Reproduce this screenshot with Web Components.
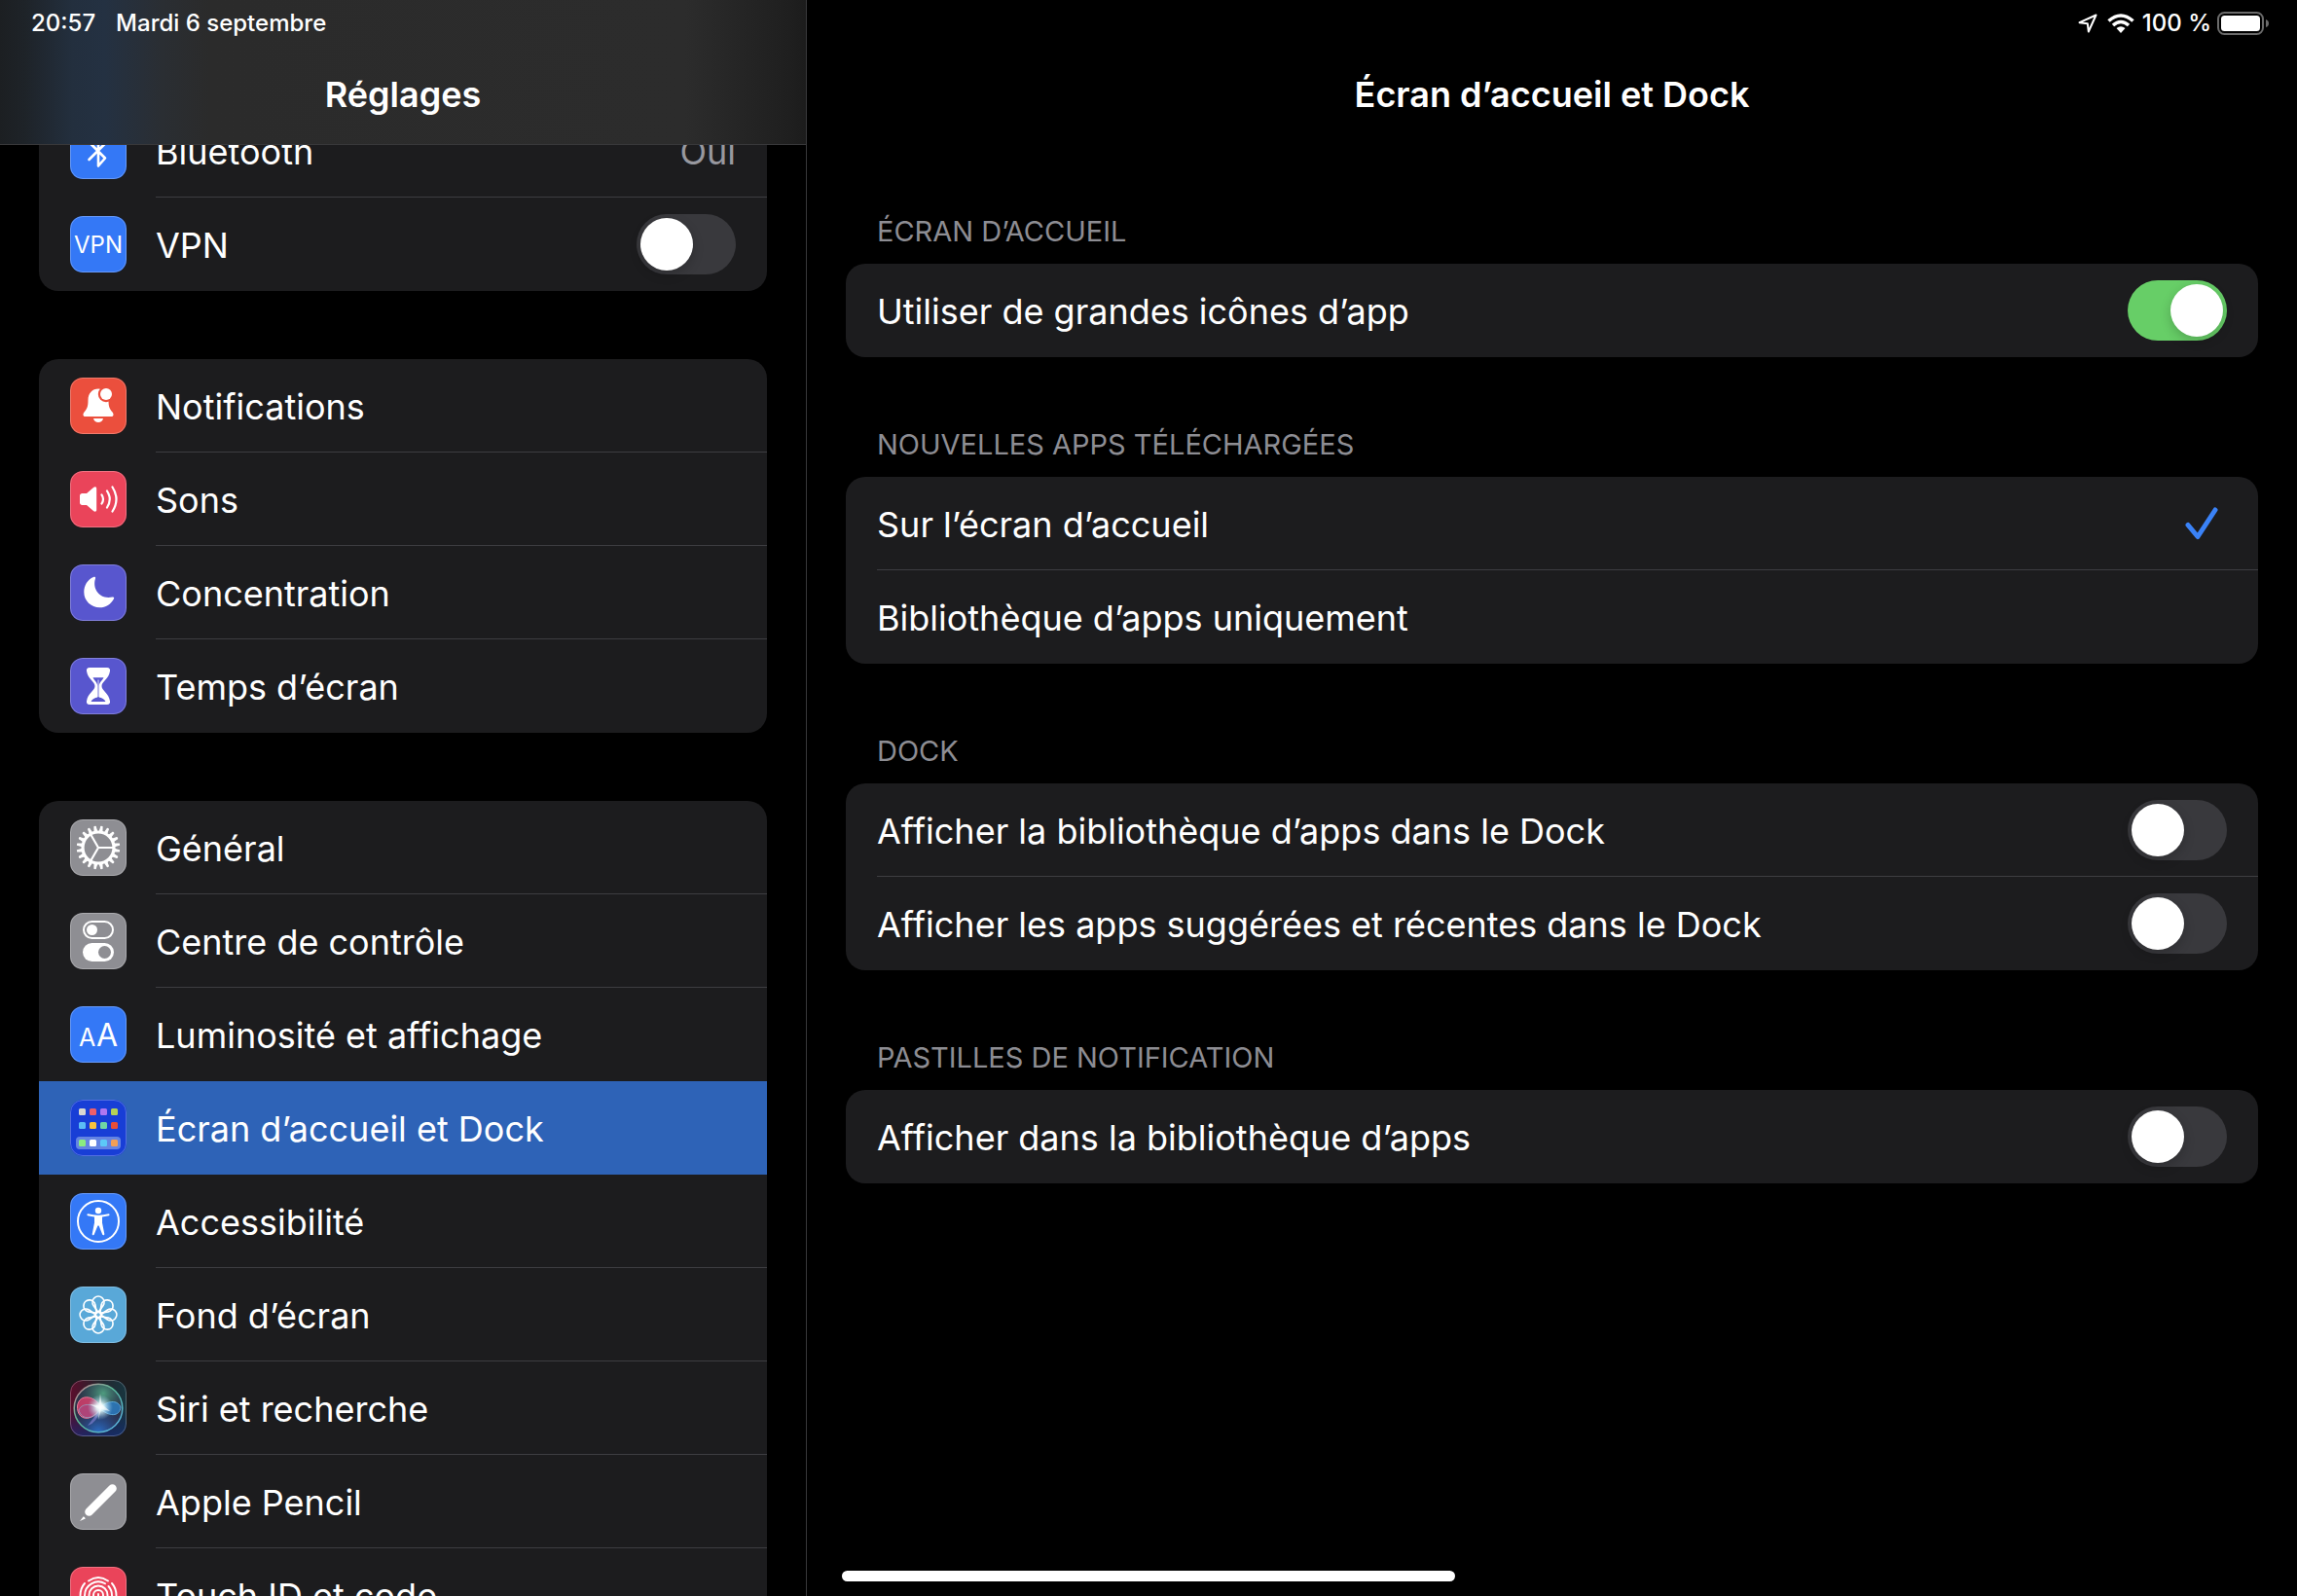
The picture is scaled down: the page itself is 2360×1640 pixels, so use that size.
<!DOCTYPE html>
<html lang="fr">
<head>
<meta charset="utf-8">
<title>Réglages</title>
<style>
    html, body {
        height: 100%;
        margin: 0;
        background: #000;
    }

    body {
        overflow: hidden;
        color: #fff;
        font-family: Inter, "Liberation Sans", sans-serif;
        font-size: 36px;
        line-height: 44px;
    }
</style>
</head>
<body>
<settings-app>
    <status-time slot="time"></status-time>
    <status-icons slot="status"></status-icons>

    <settings-group slot="sidebar">
        <settings-row icon="bluetooth" value="Oui">Bluetooth</settings-row>
        <settings-row icon="vpn" toggle>VPN</settings-row>
    </settings-group>
    <settings-group slot="sidebar">
        <settings-row icon="notifications">Notifications</settings-row>
        <settings-row icon="sounds">Sons</settings-row>
        <settings-row icon="focus">Concentration</settings-row>
        <settings-row icon="screentime">Temps d’écran</settings-row>
    </settings-group>
    <settings-group slot="sidebar">
        <settings-row icon="general">Général</settings-row>
        <settings-row icon="control">Centre de contrôle</settings-row>
        <settings-row icon="display" flush>Luminosité et affichage</settings-row>
        <settings-row icon="home" selected flush>Écran d’accueil et Dock</settings-row>
        <settings-row icon="accessibility">Accessibilité</settings-row>
        <settings-row icon="wallpaper">Fond d’écran</settings-row>
        <settings-row icon="siri">Siri et recherche</settings-row>
        <settings-row icon="pencil">Apple Pencil</settings-row>
        <settings-row icon="touchid">Touch ID et code</settings-row>
    </settings-group>

    <settings-group caption="ÉCRAN D’ACCUEIL">
        <settings-row toggle checked>Utiliser de grandes icônes d’app</settings-row>
    </settings-group>
    <settings-group caption="NOUVELLES APPS TÉLÉCHARGÉES">
        <settings-row choice checked>Sur l’écran d’accueil</settings-row>
        <settings-row choice>Bibliothèque d’apps uniquement</settings-row>
    </settings-group>
    <settings-group caption="DOCK">
        <settings-row toggle>Afficher la bibliothèque d’apps dans le Dock</settings-row>
        <settings-row toggle>Afficher les apps suggérées et récentes dans le Dock</settings-row>
    </settings-group>
    <settings-group caption="PASTILLES DE NOTIFICATION">
        <settings-row toggle>Afficher dans la bibliothèque d’apps</settings-row>
    </settings-group>
</settings-app>

<script>
// Every glyph is drawn on a 58x58 tile: [background, svg content]
const gearTeeth = Array.from({length: 20}, (_, i) =>
    `<path d="M27.600 12.500L28.300 7.200H29.700L30.400 12.500Z" transform="rotate(${i * 18 + 9} 29 29)"/>`).join('')

const petals = Array.from({length: 8}, (_, i) =>
    `<path d="M29 26.500L24 19.500A6 6 0 1 1 34 19.500Z" transform="rotate(${i * 45} 29 29)"/>`).join('')

const homeColors = [
    ['#d8d8d0', '#ec5f6b', '#b077f0', '#b5d256'],
    ['#5cbcf5', '#f8c23c', '#70d6a4', '#e84e37'],
    ['#8bee80', '#ffffff', '#5cc8f8', '#f29f55'],
]
const homeDots = homeColors.map((row, y) => row.map((color, x) =>
    `<rect x="${9 + x * 11}" y="${[9, 23, 41][y]}" width="7" height="7" rx="1.500" fill="${color}"/>`).join('')).join('')

const icons = {
    bluetooth: ['#3478f6', `<path d="M19.500 20L36 36.500L29 44.500V13.500L36 21.500L19.500 38" fill="none" stroke="#fff" stroke-width="2.600" stroke-linejoin="round" stroke-linecap="round"/>`],
    vpn: ['#3478f6', `<text x="29" y="37.500" text-anchor="middle" font-size="24">VPN</text>`],
    notifications: ['#eb4f3d', `
        <path d="M29 11.500C23 11.500 18.500 16 18.500 23C18.500 30 17.500 32 14.500 35.500C13 37.500 13 40 15.500 40H42.500C45 40 45 37.500 43.500 35.500C40.500 32 39.500 30 39.500 23C39.500 16 35 11.500 29 11.500Z"/>
        <circle cx="37" cy="17" r="8.200" fill="#eb4f3d"/><circle cx="37" cy="17" r="6"/>
        <path d="M24 42H34C33.500 44.500 31.500 46 29 46S24.500 44.500 24 42Z"/>`],
    sounds: ['#ea445a', `
        <path d="M10 25.500C10 24 11 23 12.500 23H17L24 17C25.500 15.700 27.200 16.300 27.200 18V40C27.200 41.700 25.500 42.300 24 41L17 35H12.500C11 35 10 34 10 32.500Z"/>
        <path d="M32.500 24.500Q35.500 29 32.500 33.500M38 20.500Q43.500 29 38 37.500M43.500 16.500Q51.500 29 43.500 41.500" fill="none" stroke="#fff" stroke-width="2.200" stroke-linecap="round"/>`],
    focus: ['#5856ce', `<path d="M24 13C25.500 12.500 26.500 13.200 26 14.500C22.500 25 30.500 36.500 43.500 33.500C45 33.200 45.500 34 45 35.200C42 41 36.500 44.300 30.500 44.300C21.500 44.300 14.300 37.200 14.300 28.500C14.300 21.500 18 15.500 24 13Z"/>`],
    screentime: ['#5856ce', `
        <path d="M20 10H38C40.300 10 41.300 11.500 41 13.500C40 21.500 32.500 24.500 32.500 29S40 36.500 41 44.500C41.300 46.500 40.300 48 38 48H20C17.700 48 16.700 46.500 17 44.500C18 36.500 25.500 33.500 25.500 29S18 21.500 17 13.500C16.700 11.500 17.700 10 20 10Z"/>
        <path d="M23.500 20.200H34.500C33 23.500 29.700 25.500 29.700 29V40.500C32.500 41 35.500 42.500 36.500 45H21.500C22.500 42.500 25.500 41 28.300 40.500V29C28.300 25.500 25 23.500 23.500 20.200Z" fill="#5856ce"/>
        <path d="M29 22.500V40" stroke="#fff" stroke-width="0.800"/>`],
    general: ['#8e8e93', `
        <circle cx="29" cy="29" r="16" fill="none" stroke="#fff" stroke-width="3.200"/>
        <g stroke="#fff" stroke-width="1" stroke-linejoin="round">${gearTeeth}</g>
        <path d="M29 29H44M29 29L21.500 16M29 29L21.500 42" stroke="#fff" stroke-width="2.200"/>`],
    control: ['#8e8e93', `
        <rect x="14" y="9" width="30" height="17" rx="8.500" fill="none" stroke="#fff" stroke-width="2"/><circle cx="22.500" cy="17.500" r="5.500"/>
        <rect x="13" y="31" width="32" height="19" rx="9.500"/><circle cx="35.500" cy="40.500" r="6.500" fill="#8e8e93"/>`],
    display: ['#3478f6', `<text x="9" y="41" font-size="25">A</text><text x="27" y="41" font-size="32">A</text>`],
    home: ['#183ed6', `<rect x="6" y="38" width="46" height="13" rx="4" fill="#6484e3"/>${homeDots}`],
    accessibility: ['#3478f6', `
        <circle cx="29" cy="29" r="21" fill="none" stroke="#fff" stroke-width="2"/><circle cx="29" cy="18" r="3.200"/>
        <path d="M18.500 21.300Q29 24 39.500 21.300C40.800 21.200 41 22.800 39.800 23.200L33 24.600V30.500L35.300 42C35.400 43.400 33.600 43.700 33.200 42.500L29.600 33.500H28.400L24.800 42.500C24.400 43.700 22.600 43.400 22.700 42L25 30.500V24.600L18.200 23.200C17 22.800 17.200 21.200 18.500 21.300Z"/>`],
    wallpaper: ['#59a8d8', `<g fill="none" stroke="#fff" stroke-width="1.700">${petals}<circle cx="29" cy="29" r="3.200"/></g>`],
    siri: ['#231830', `
        <defs>
            <linearGradient id="base" x1="0" y1="0" x2="1" y2="0"><stop offset="0" stop-color="#5c0d2c"/><stop offset=".5" stop-color="#26242c"/><stop offset="1" stop-color="#173640"/></linearGradient>
            <linearGradient id="deep" x1="0" y1="0" x2="0" y2="1"><stop offset=".5" stop-color="#10206a" stop-opacity="0"/><stop offset="1" stop-color="#142c7c" stop-opacity=".7"/></linearGradient>
            <linearGradient id="rim" x1="0" y1="0" x2="1" y2="1"><stop offset="0" stop-color="#d08094"/><stop offset=".45" stop-color="#58b896"/><stop offset="1" stop-color="#5ab0f0"/></linearGradient>
            <radialGradient id="green" cx=".6" cy=".2" r=".55"><stop offset="0" stop-color="#4f9d80"/><stop offset="1" stop-color="#2c5a60" stop-opacity="0"/></radialGradient>
            <radialGradient id="blue" cx=".5" cy="1" r=".6"><stop offset="0" stop-color="#2c70c8"/><stop offset="1" stop-color="#20408c" stop-opacity="0"/></radialGradient>
            <radialGradient id="glow"><stop offset="0" stop-color="#fff"/><stop offset=".3" stop-color="#e8ffff" stop-opacity=".9"/><stop offset="1" stop-color="#9ce" stop-opacity="0"/></radialGradient>
        </defs>
        <rect width="58" height="58" fill="url(#base)"/><rect width="58" height="58" fill="url(#deep)"/>
        <circle cx="29" cy="29" r="25" fill="#2c3046"/><circle cx="29" cy="29" r="25" fill="url(#green)"/><circle cx="29" cy="29" r="25" fill="url(#blue)"/>
        <path d="M32 29C27 16 9 13 7.500 27C7 42 22 44 32 29Z" fill="#d63e6c" fill-opacity=".85" stroke="#ec7a98"/>
        <path d="M9 31C13 22 24 26 31 29C24 41 12 42 9 31Z" fill="#a04c88" fill-opacity=".5" stroke="#93a9cc" stroke-width=".7"/>
        <path d="M30 29C38 21 49 20 52 28C51 38 40 38 30 29Z" fill="#2c7ac0" fill-opacity=".85" stroke="#66b8e8" stroke-width=".8"/>
        <path d="M31 30L18 47Q28 44 31 30L43 43Z" fill="#8b85d8" fill-opacity=".6"/>
        <circle cx="29" cy="29" r="24.800" fill="none" stroke="url(#rim)" stroke-width="1.500"/>
        <circle cx="31" cy="28" r="13" fill="url(#glow)"/>
        <path d="M31 14L32.500 25L41 32L32 30L29 41L30 30L20 25L29.500 26Z" fill="#fff" fill-opacity=".6"/>`],
    pencil: ['#8e8e93', `
        <path d="M43.500 15.500L19.500 39.500" stroke="#fff" stroke-width="8.600" stroke-linecap="round"/>
        <path d="M13.800 44.200Q15.300 45 15.800 46.500L10 49Z"/>`],
    touchid: ['#ea445a', `<g fill="none" stroke="#fff" stroke-width="1.900" stroke-linecap="round">
        <path d="M19 14.500Q29 7.500 39 14.500M15 17Q10.500 22 10.500 29.500M43 17Q47.500 22 47.500 29.500"/>
        <path d="M15 34V29.500A14 14 0 0 1 36 17.300M39.500 20A14 14 0 0 1 43 29.500V36"/>
        <path d="M19.500 38V29A9.500 9.500 0 0 1 38.500 29V40M24 40V29A5 5 0 0 1 34 29V42M29 28V42"/></g>`],
}

class StatusTime extends HTMLElement {
    constructor() {
        super();
        this.attachShadow({mode: 'open'}).innerHTML = `
            <style>
                :host {
                    display: flex;
                    gap: 21px;
                    font-size: 24px;
                    line-height: 28px;
                    font-weight: 500;
                }
            </style>
            <span>20:57</span><span>Mardi 6 septembre</span>
        `
    }
}

class StatusIcons extends HTMLElement {
    constructor() {
        super();
        this.attachShadow({mode: 'open'}).innerHTML = `
            <style>
                :host {
                    display: flex;
                    align-items: center;
                    font-size: 24px;
                    line-height: 28px;
                    font-weight: 500;
                }
                .wifi { margin: 0 8px 0 10px; }
                .battery { margin-left: 6px; }
            </style>
            <svg width="20" height="20" viewBox="0 0 20 20"><path d="M18.500 1.500L1.500 9.200L9.800 10.200L10.800 18.500Z" fill="none" stroke="#fff" stroke-width="2" stroke-linejoin="round"/></svg>
            <svg class="wifi" width="28" height="20" viewBox="0 0 28 20"><g fill="none" stroke="#fff" stroke-width="3.600"><path d="M1.500 7.500Q14 -3.500 26.500 7.500"/><path d="M6 12Q14 5 22 12"/></g><path d="M9.500 15Q14 11.500 18.500 15L14 20Z" fill="#fff"/></svg>
            <span>100 %</span>
            <svg class="battery" width="54" height="24" viewBox="0 0 54 24"><rect x="1" y="1" width="46" height="22" rx="6.500" fill="none" stroke="#6b6b6b" stroke-width="2"/><rect x="4" y="4" width="40" height="16" rx="3.500" fill="#fff"/><path d="M50 8Q53 9 53 12T50 16Z" fill="#6b6b6b"/></svg>
        `
    }
}

class SettingsIcon extends HTMLElement {
    constructor() {
        super();
        this.attachShadow({mode: 'open'})
    }

    connectedCallback() {
        const [color, glyph] = icons[this.getAttribute('name')]
        this.shadowRoot.innerHTML = `
            <style>
                :host {
                    display: block;
                    position: relative;
                    flex: none;
                    width: 58px;
                    height: 58px;
                    border-radius: 13px;
                    overflow: hidden;
                    background: ${color};
                }
                :host::after {
                    content: "";
                    position: absolute;
                    inset: 0;
                    border: 1px solid rgba(255, 255, 255, .25);
                    border-radius: 13px;
                }
                svg { display: block; }
            </style>
            <svg width="58" height="58" viewBox="0 0 58 58" fill="#fff">${glyph}</svg>
        `
    }
}

class SettingsRow extends HTMLElement {
    constructor() {
        super();
        this.attachShadow({mode: 'open'})
    }

    connectedCallback() {
        const icon = this.getAttribute('icon')
        const checked = this.hasAttribute('checked') ? 'checked' : ''
        // Toggles and choices are labels of their input, the others open a page
        let tag = 'a href="#"'
        let control = ''
        if (this.hasAttribute('toggle')) {
            tag = 'label'
            control = `<input class="switch" type="checkbox" role="switch" ${checked}>`
        }
        else if (this.hasAttribute('choice')) {
            tag = 'label'
            control = `
                <input class="choice" type="radio" ${checked}>
                <svg class="tick" width="36" height="34" viewBox="0 0 36 34"><path d="M4 18.500L14 30.500L32 3" fill="none" stroke="#3a82f7" stroke-width="5" stroke-linecap="round" stroke-linejoin="round"/></svg>`
        }
        else if (this.hasAttribute('value')) {
            control = `<span class="text value">${this.getAttribute('value')}</span>`
        }

        this.shadowRoot.innerHTML = `
            <style>
                :host { display: block; }
                :host([selected]) { background: #2e63b7; }
                .row {
                    display: flex;
                    gap: 30px;
                    height: 96px;
                    padding-left: 32px;
                    align-items: center;
                    color: inherit;
                    text-decoration: none;
                }
                .body {
                    display: flex;
                    flex: 1;
                    align-items: center;
                    justify-content: space-between;
                    align-self: stretch;
                    box-sizing: border-box;
                    padding-right: 32px;
                    border-bottom: 1px solid #3d3d41;
                }
                :host([flush]) .body, :host(:last-of-type) .body { border-color: transparent; }
                .text { padding-top: 2px; }
                .value { color: #98989f; }
                input { appearance: none; margin: 0; }
                .switch {
                    width: 102px;
                    height: 62px;
                    padding: 4px;
                    box-sizing: border-box;
                    border-radius: 31px;
                    background: #39393d;
                }
                .switch::before {
                    content: "";
                    display: block;
                    width: 54px;
                    height: 54px;
                    border-radius: 50%;
                    background: #fff;
                    box-shadow: 0 4px 12px rgba(0, 0, 0, .2);
                }
                .switch:checked { background: #67ce67; }
                .switch:checked::before { margin-left: auto; }
                .choice { flex: 1; }
                .tick { visibility: hidden; margin-right: 8px; }
                .choice:checked + .tick { visibility: visible; }
            </style>
            <${tag} class="row">
                ${icon ? `<settings-icon name="${icon}"></settings-icon>` : ''}
                <span class="body"><span class="text"><slot></slot></span>${control}</span>
            </${tag.split(' ')[0]}>
        `
    }
}

class SettingsGroup extends HTMLElement {
    constructor() {
        super();
        this.attachShadow({mode: 'open'})
    }

    connectedCallback() {
        const caption = this.getAttribute('caption')
        this.shadowRoot.innerHTML = `
            <style>
                :host { display: block; }
                h2 {
                    margin: 0;
                    padding: 0 32px 15px;
                    color: #8d8d93;
                    font-size: 29px;
                    line-height: 36px;
                    font-weight: 400;
                }
                .card {
                    border-radius: 20px;
                    overflow: hidden;
                    background: #1c1c1e;
                }
            </style>
            ${caption ? `<h2>${caption}</h2>` : ''}
            <div class="card"><slot></slot></div>
        `
    }
}

class SettingsApp extends HTMLElement {
    constructor() {
        super();
        this.attachShadow({mode: 'open'}).innerHTML = `
            <style>
                :host {
                    display: grid;
                    grid-template-columns: minmax(0, 829fr) minmax(0, 1531fr);
                    height: 100vh;
                    position: relative;
                    overflow: hidden;
                }
                aside {
                    border-right: 1px solid #38383a;
                    overflow: hidden;
                }
                header {
                    display: flex;
                    flex-direction: column;
                    box-sizing: border-box;
                    height: 148px;
                    padding-top: 10px;
                    position: relative;
                }
                aside header {
                    z-index: 1;
                    background: linear-gradient(90deg, #1c1f22 0, #1e2328 3%, #232f3e 9%, #243142 13%, #2a2e33 20%, #2b2b2b 26%, #2c2c2c 85%, #1f1f1f 98%, #1c1c1c);
                    box-shadow: 0 1px #38383a;
                }
                h1 {
                    margin: 37px 0 0;
                    font-size: 36px;
                    line-height: 44px;
                    font-weight: 600;
                    text-align: center;
                }
                .status {
                    display: flex;
                    height: 28px;
                    padding: 0 28px 0 32px;
                }
                main .status { justify-content: flex-end; }
                nav, section {
                    display: flex;
                    flex-direction: column;
                    padding: 0 40px;
                }
                /* The list is scrolled a little, its first row goes under the header */
                nav { gap: 70px; margin-top: -41px; }
                section { gap: 72px; padding-top: 72px; }
                .indicator {
                    position: absolute;
                    bottom: 15px;
                    left: 50%;
                    width: 630px;
                    height: 11px;
                    transform: translateX(-50%);
                    border-radius: 6px;
                    background: #fff;
                }
            </style>
            <aside>
                <header><div class="status"><slot name="time"></slot></div><h1>Réglages</h1></header>
                <nav><slot name="sidebar"></slot></nav>
            </aside>
            <main>
                <header><div class="status"><slot name="status"></slot></div><h1>Écran d’accueil et Dock</h1></header>
                <section><slot></slot></section>
            </main>
            <div class="indicator"></div>
        `
    }
}

customElements.define('status-time', StatusTime);
customElements.define('status-icons', StatusIcons);
customElements.define('settings-icon', SettingsIcon);
customElements.define('settings-row', SettingsRow);
customElements.define('settings-group', SettingsGroup);
customElements.define('settings-app', SettingsApp);
</script>
</body>
</html>
